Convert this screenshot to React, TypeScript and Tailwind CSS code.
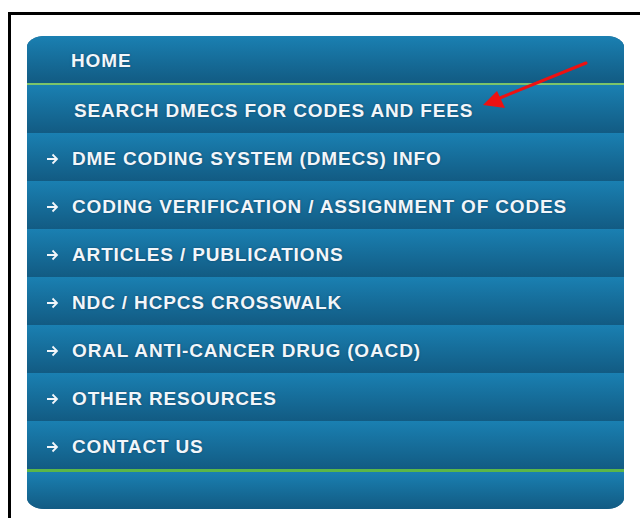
import React from "react";

const links = [
  "DME CODING SYSTEM (DMECS) INFO",
  "CODING VERIFICATION / ASSIGNMENT OF CODES",
  "ARTICLES / PUBLICATIONS",
  "NDC / HCPCS CROSSWALK",
  "ORAL ANTI-CANCER DRUG (OACD)",
  "OTHER RESOURCES",
  "CONTACT US",
];

const rowBg = "bg-gradient-to-b from-[#1a80b2] to-[#125b83]";
const label =
  "font-[family-name:'Liberation_Sans',Arial,sans-serif] text-[19px] font-bold tracking-[0.85px] text-[#f2f6fa] [text-shadow:0_0_2px_rgba(8,40,70,0.6)]";

function Arrow() {
  return (
    <svg width="13" height="12" viewBox="0 0 13 12" className="shrink-0">
      <path
        d="M1 6h10M6.5 1.5 11 6l-4.5 4.5"
        fill="none"
        stroke="#f2f6fa"
        strokeWidth="1.8"
      />
    </svg>
  );
}

export default function App() {
  return (
    <div className="min-h-[521px] overflow-hidden bg-white">
      <div className="ml-2 mt-3 min-h-[506px] border-l-[3px] border-t-[3px] border-black pl-4 pt-[21px]">
        <div className="relative w-[597px]">
          <nav className="overflow-hidden rounded-[18px/11px] bg-[#125b83]">
            <a className={`flex h-[47px] items-center pl-[44px] pt-[4px] ${rowBg}`}>
              <span className={label}>HOME</span>
            </a>
            <div className="h-[2px] bg-[#7cc36a]" />
            <a className={`flex h-[48px] items-center pl-[47px] pt-[4px] ${rowBg}`}>
              <span className={label}>SEARCH DMECS FOR CODES AND FEES</span>
            </a>
            {links.map((text) => (
              <a
                key={text}
                className={`flex h-[48px] items-center gap-[13px] pl-[19px] pt-[4px] ${rowBg}`}
              >
                <Arrow />
                <span className={label}>{text}</span>
              </a>
            ))}
            <div className="h-[3px] bg-[#5bb648]" />
            <div className={`h-[37px] ${rowBg}`} />
          </nav>

          {/* pointer next to the search link */}
          <svg
            className="pointer-events-none absolute left-0 top-0"
            width="597"
            height="120"
            viewBox="0 0 597 120"
          >
            <line
              x1="559"
              y1="27"
              x2="468"
              y2="64"
              stroke="#ee1111"
              strokeWidth="3"
              strokeLinecap="round"
            />
            <polygon points="456,69 470,55 478,72" fill="#ee1111" />
          </svg>
        </div>
      </div>
    </div>
  );
}
